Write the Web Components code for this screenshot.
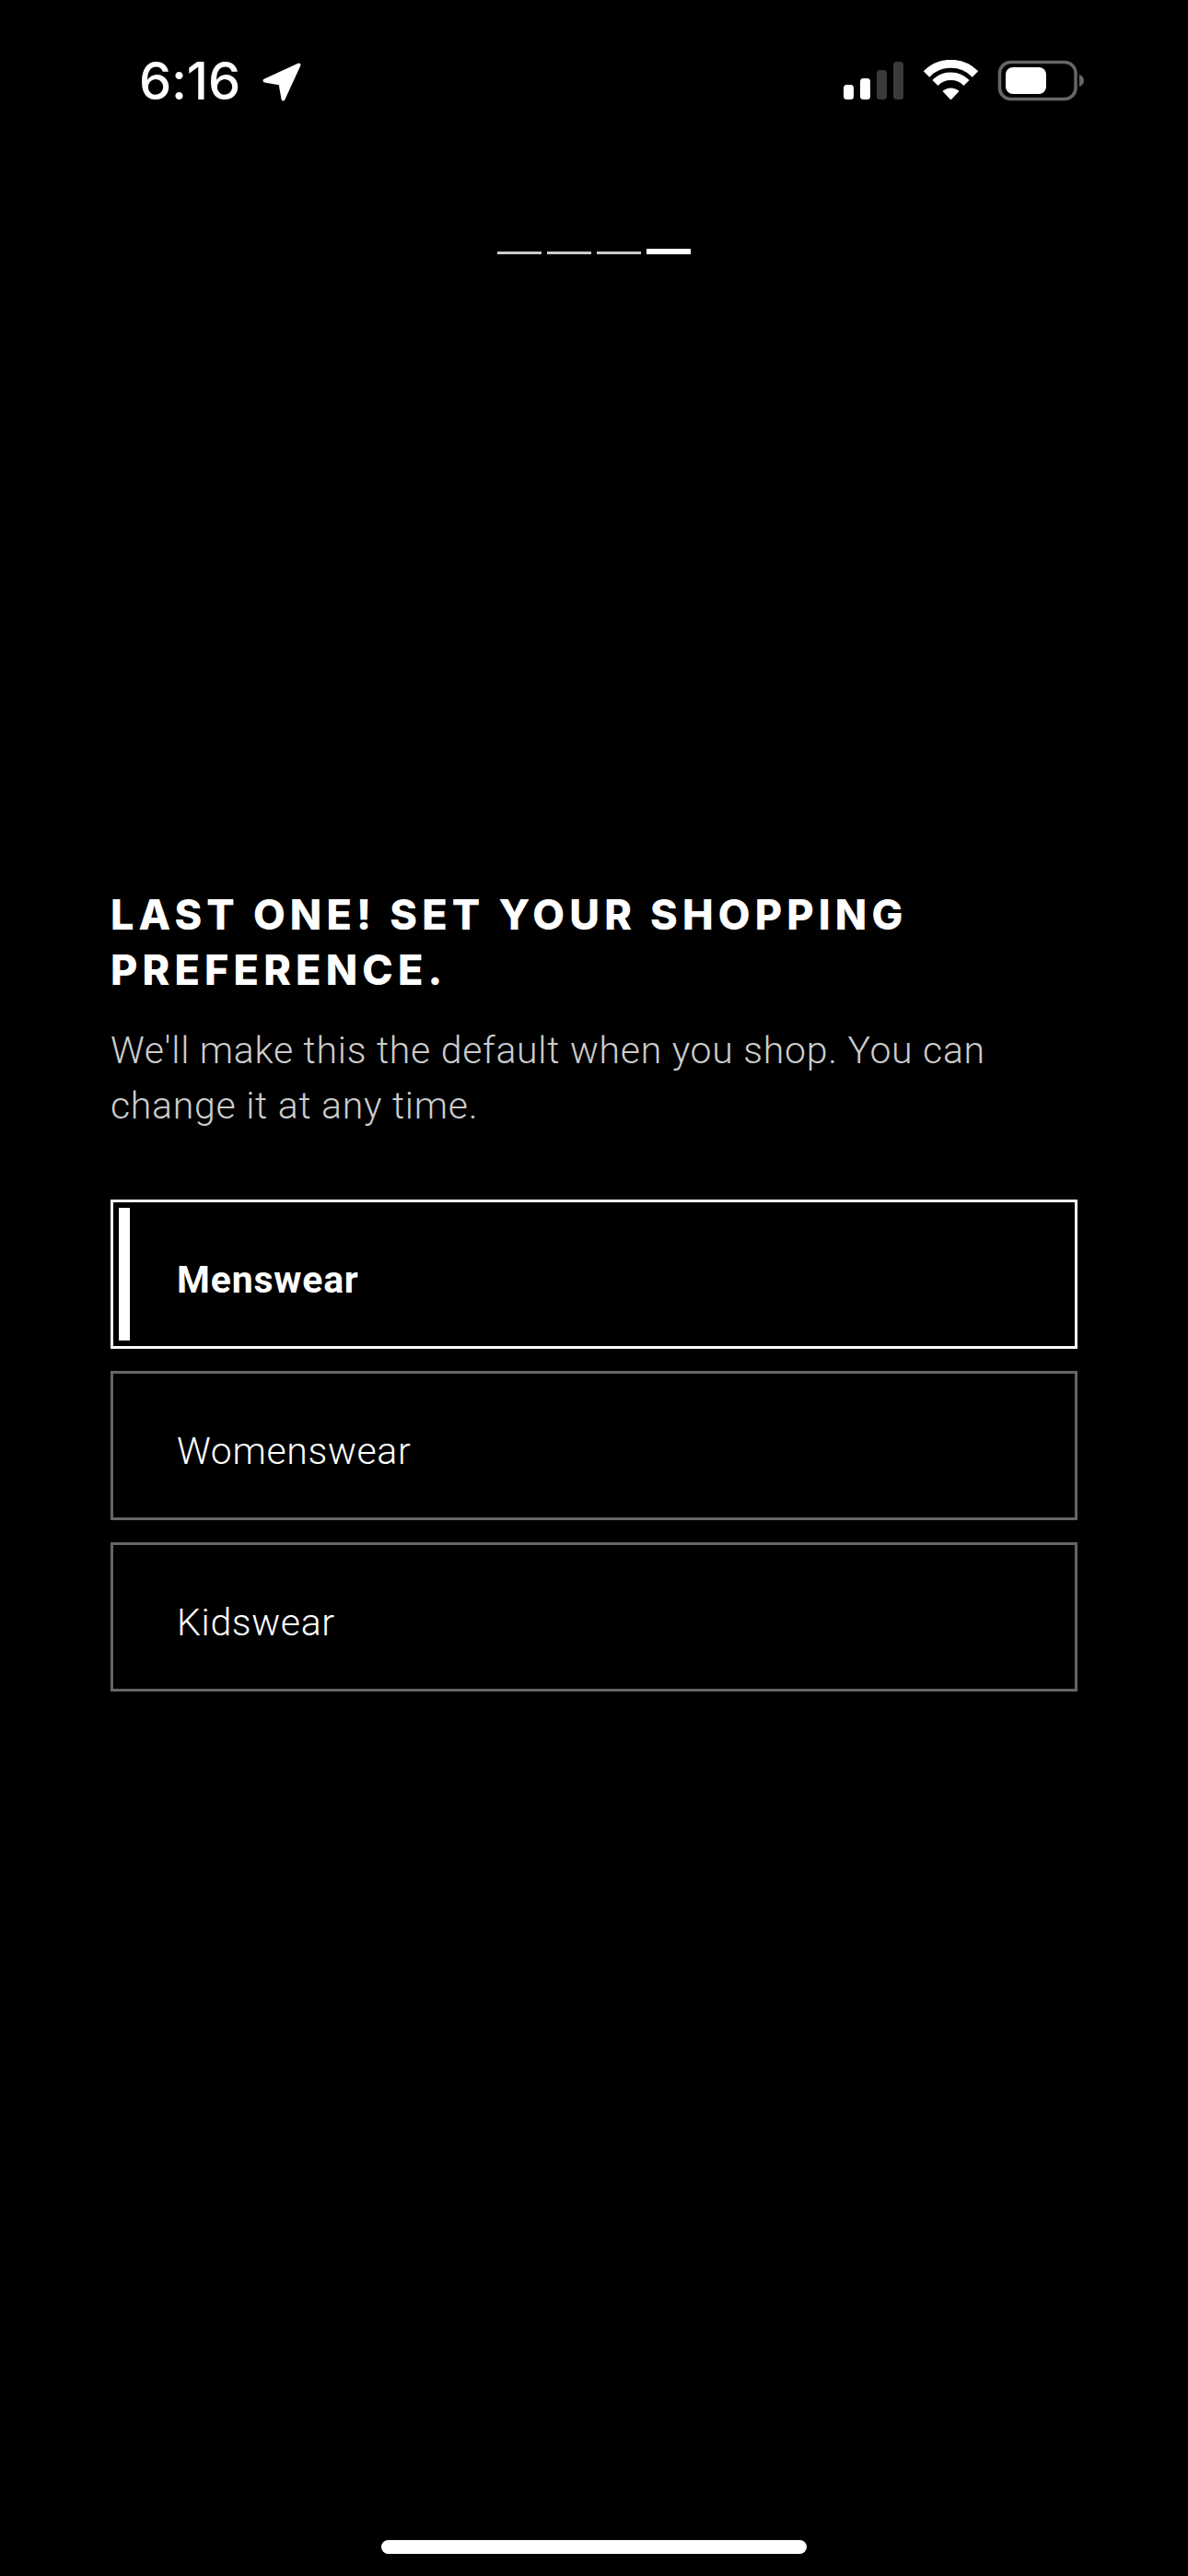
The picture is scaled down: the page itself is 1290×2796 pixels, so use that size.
<!DOCTYPE html>
<html><head><meta charset="utf-8"><title>Shopping preference</title>
<style>
html,body{margin:0;padding:0;background:#000}
</style></head>
<body>
<pref-screen>
  <status-bar slot="status"></status-bar>
  <step-progress slot="progress" total="4" current="4"></step-progress>
  <pref-intro slot="intro">
    <span slot="title">LAST ONE! SET YOUR SHOPPING PREFERENCE.</span>
    We'll make this the default when you shop. You can change it at any time.
  </pref-intro>
  <pref-option slot="options" selected>Menswear</pref-option>
  <pref-option slot="options">Womenswear</pref-option>
  <pref-option slot="options">Kidswear</pref-option>
  <home-bar slot="home"></home-bar>
</pref-screen>
<script>
function def(name,html,setup){
  customElements.define(name,class extends HTMLElement{
    constructor(){super();this.attachShadow({mode:'open'}).innerHTML=html;}
    connectedCallback(){if(setup)setup(this);}
  });
}
def('pref-screen',`<style>
:host{display:flex;flex-direction:column;width:1290px;height:2796px;background:#000;color:#fff;overflow:hidden}
.intro{display:block;margin-top:687px;padding:0 120px}
.opts{display:flex;flex-direction:column;gap:24px;margin:72px 120px 0}
.home{display:block;margin-top:auto}
</style>
<slot name="status"></slot><slot name="progress"></slot>
<div class="intro"><slot name="intro"></slot></div>
<div class="opts"><slot name="options"></slot></div>
<div class="home"><slot name="home"></slot></div>`);

def('status-bar',`<style>
:host{display:flex;align-items:flex-start;height:120px;box-sizing:border-box;padding:55px 111px 0 151px}
.time{font:500 56px/66px Inter,"Liberation Sans",sans-serif;letter-spacing:-.2px;height:66px;color:#fff}
svg{display:block;flex:none}
.arrow{margin:12px 0 0 23px}
.right{display:flex;margin-left:auto;padding-top:10px}
</style>
<span class="time">6:16</span>
<svg class="arrow" width="44" height="44" viewBox="285 66 44 44"><path d="M325.500 69.500 288.500 86.500 305.500 89.500 308.500 106.500Z" fill="#fff" stroke="#fff" stroke-width="4" stroke-linejoin="round"/></svg>
<div class="right">
<svg width="264" height="46" viewBox="915 64 264 46">
  <rect x="916" y="91" width="11" height="16" rx="3.500" fill="#fff"/>
  <rect x="934" y="84" width="11" height="23" rx="3.500" fill="#fff"/>
  <rect x="952" y="75" width="11" height="32" rx="3.500" fill="#3a3a3a"/>
  <rect x="970" y="66" width="11" height="41" rx="3.500" fill="#3a3a3a"/>
  <path d="M1006 79.500A37 37 0 0 1 1059 79.500" fill="none" stroke="#fff" stroke-width="9"/>
  <path d="M1015.500 89A23.500 23.500 0 0 1 1049.500 89" fill="none" stroke="#fff" stroke-width="8.500"/>
  <path d="M1023.500 98A13 13 0 0 1 1041.500 98L1033.500 106.500Q1032.500 107.500 1031.500 106.500Z" fill="#fff"/>
  <rect x="1085.500" y="66.500" width="82.500" height="40" rx="12" fill="none" stroke="#666" stroke-width="3.500"/>
  <rect x="1092" y="72" width="44" height="29" rx="8" fill="#fff"/>
  <path d="M1172 80C1175 81 1177 83.500 1177 86.500 1177 89.500 1175 92 1172 93Z" fill="#666"/>
</svg>
</div>`);

def('step-progress',`<style>
:host{display:flex;justify-content:center;align-items:flex-end;gap:6px;height:36px;margin-top:120px}
i{display:block;width:48px;height:3px;background:#ccc}
i.on{height:6px;background:#fff}
</style><i></i><i></i><i></i><i class="on"></i>`);

def('pref-intro',`<style>
:host{display:block}
h1{margin:0 0 27px;font:800 45px/60px Inter,"Liberation Sans",sans-serif;letter-spacing:5.16px;color:#fff}
p{margin:0;font:300 41px/60px Roboto,"Liberation Sans",sans-serif;letter-spacing:.72px;color:#ccc}
</style><h1><slot name="title"></slot></h1><p><slot></slot></p>`);

def('pref-option',`<style>
:host{display:block;position:relative;box-sizing:border-box;height:162px;border:3px solid #666;padding:54px 0 0 69px;font:300 41px/60px Roboto,"Liberation Sans",sans-serif;letter-spacing:.65px;color:#fff}
:host([selected]){border-color:#fff;font-weight:700;letter-spacing:.8px}
:host([selected])::before{content:"";position:absolute;left:6px;top:6px;bottom:6px;width:12px;background:#fff}
</style><slot></slot>`);

def('home-bar',`<style>
:host{display:flex;justify-content:center;padding-bottom:24px}
i{display:block;width:462px;height:15px;border-radius:8px;background:#fff}
</style><i></i>`);
</script>
</body></html>
